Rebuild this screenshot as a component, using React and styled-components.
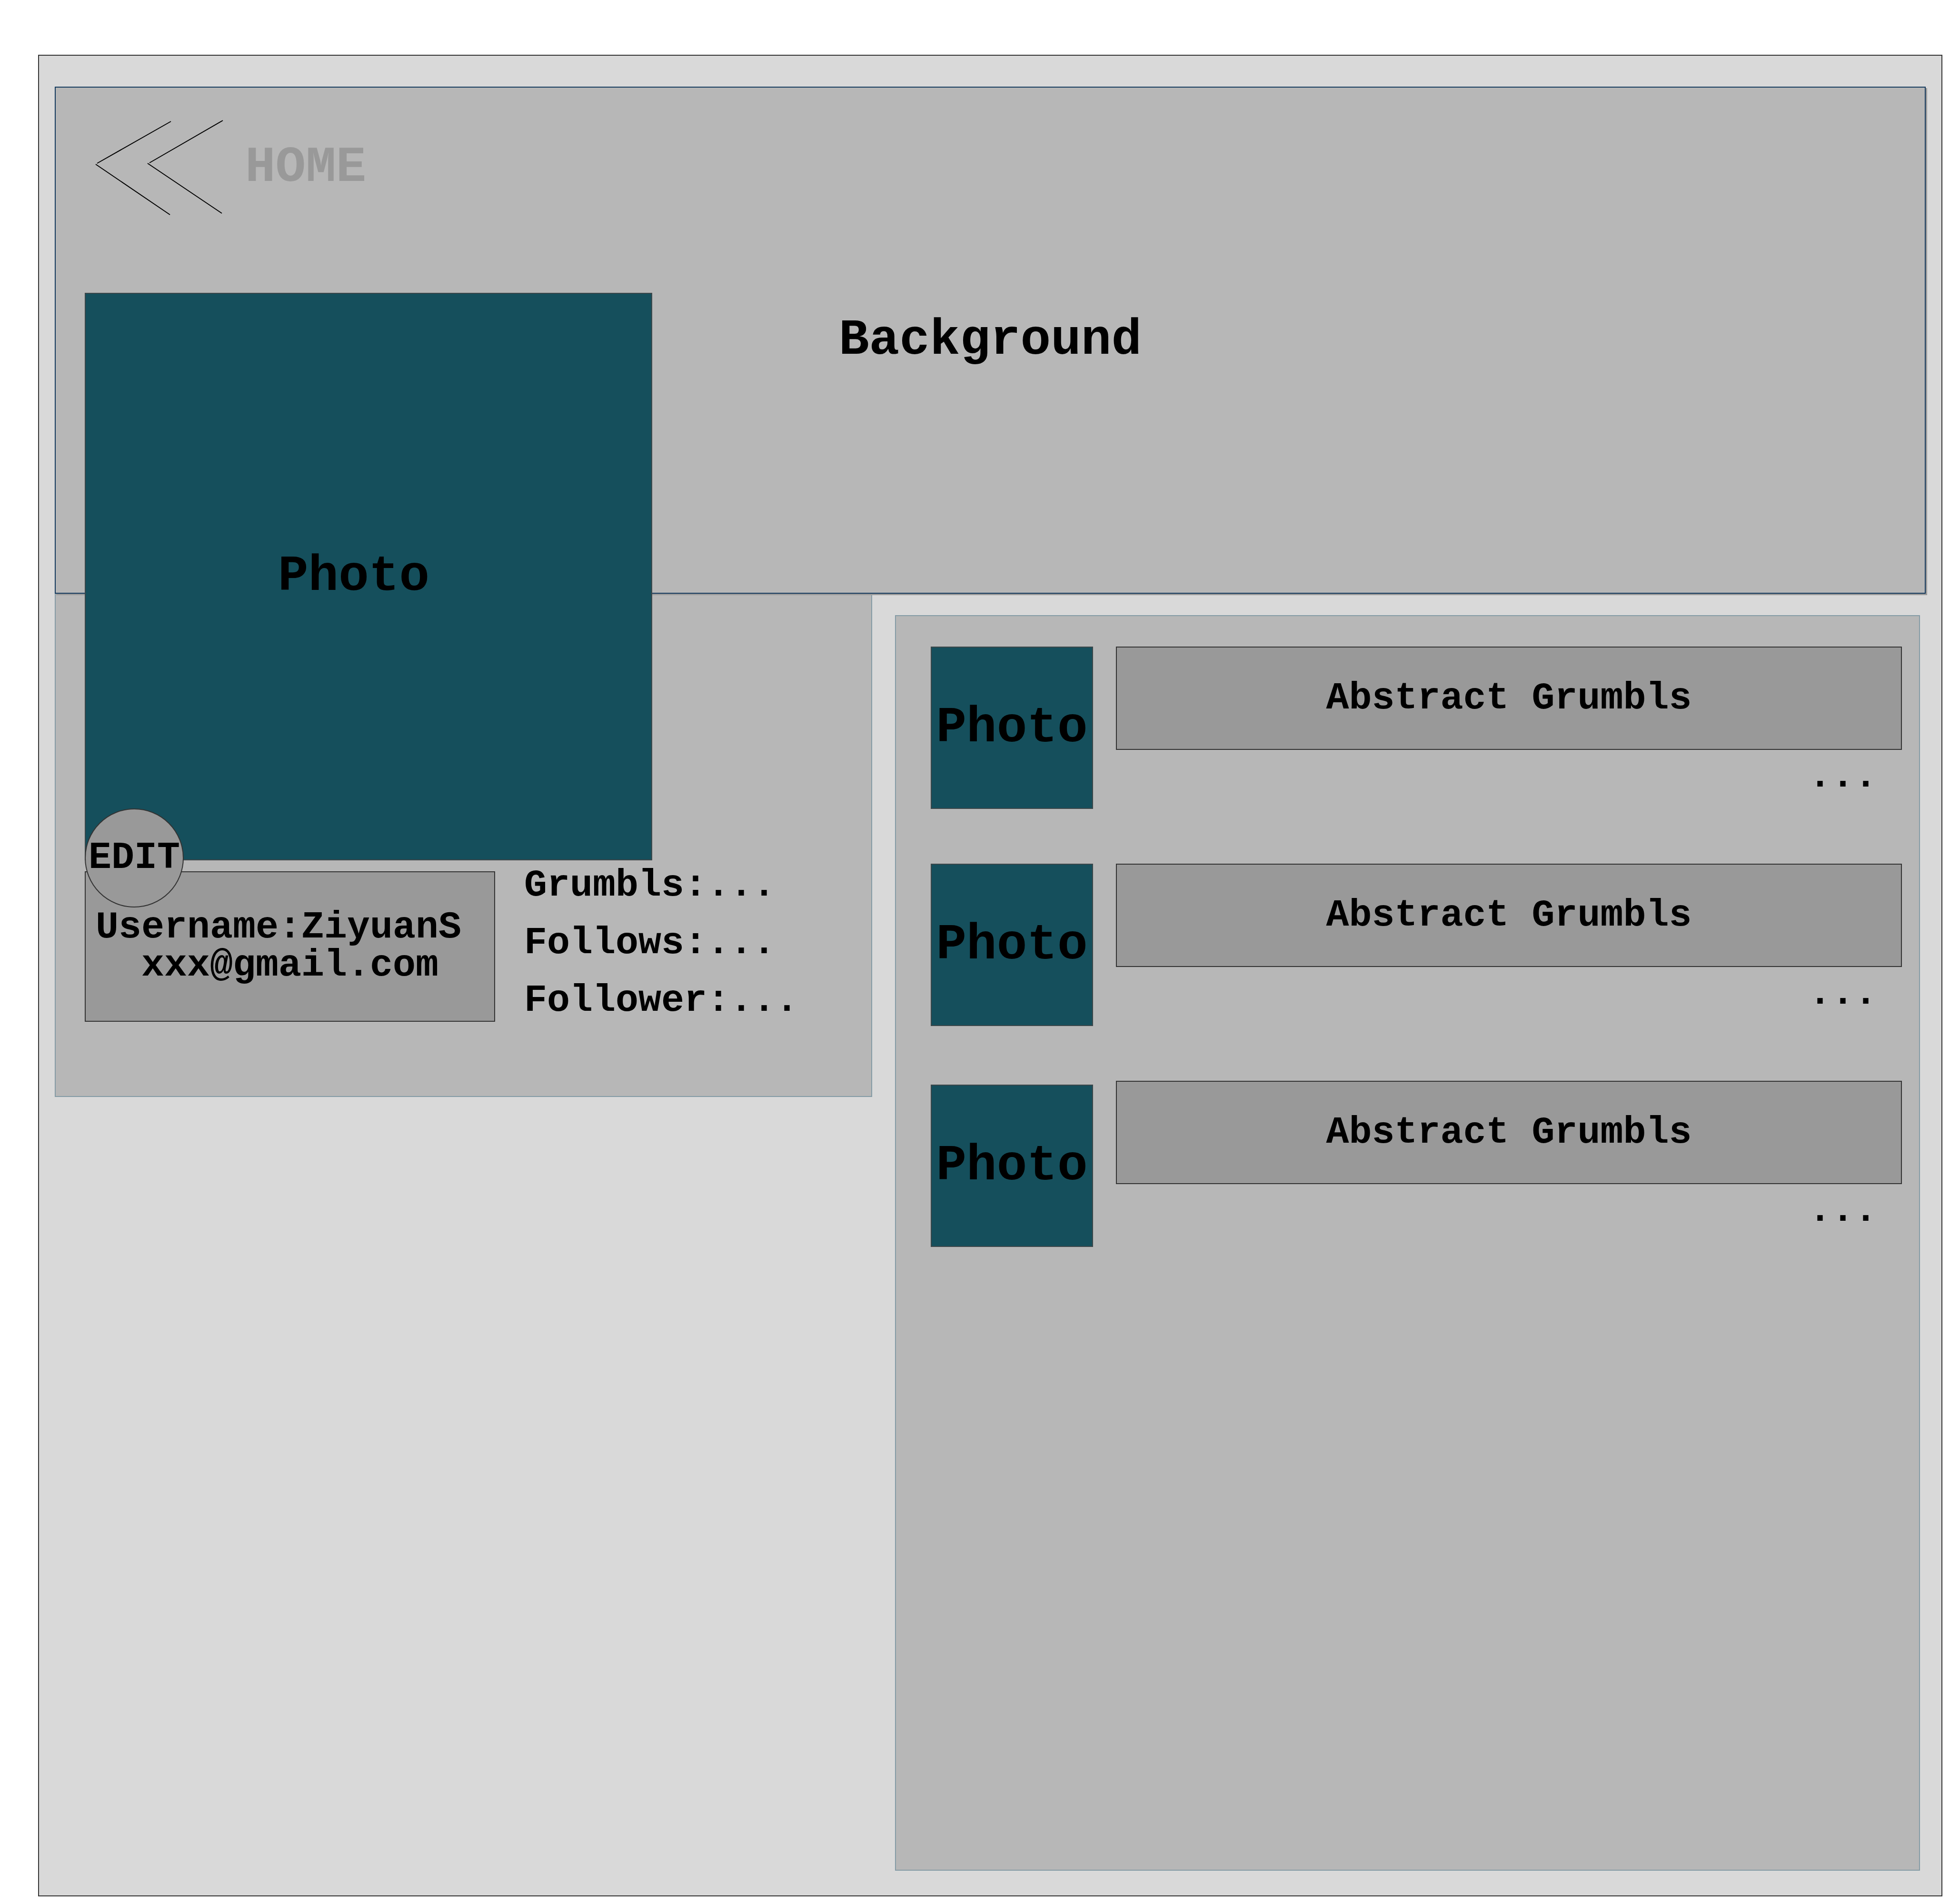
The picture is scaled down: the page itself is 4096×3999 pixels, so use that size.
import React from "react";
import styled, { createGlobalStyle } from "styled-components";

const GlobalStyle = createGlobalStyle`
  *, *::before, *::after { box-sizing: border-box; }
  body {
    margin: 0;
    background: #ffffff;
    color: #000000;
    font-family: "Liberation Mono", monospace;
    font-weight: 700;
    font-size: 80px;
    line-height: 80px;
  }
  button {
    font: inherit;
    color: inherit;
    cursor: pointer;
  }
`;

const Page = styled.div`
  display: flex;
  min-height: 100vh;
  padding: 115px 16px 16px 80px;
`;

const Frame = styled.main`
  display: flex;
  flex: 1;
  flex-direction: column;
  padding: 65px 33px 52px;
  border: 2px solid #333333;
  background: #d9d9d9;
`;

const Banner = styled.header`
  position: relative;
  z-index: 1;
  display: grid;
  min-height: 1065px;
  padding: 0 83px;
  border: 2px solid #143a5e;
  background: #b7b7b7;
  box-shadow: 3px 3px 0 #999999;
`;

const HomeLink = styled.a`
  grid-area: 1 / 1;
  place-self: start;
  display: flex;
  align-items: center;
  gap: 45px;
  margin-top: 68px;
  color: #999999;
  font-size: 106px;
  line-height: 120px;
  text-decoration: none;
`;

const BackIcon = styled.svg`
  width: 270px;
  height: 200px;
  fill: none;
  stroke: #000000;
  stroke-width: 2;
`;

const BannerTitle = styled.h1`
  grid-area: 1 / 1;
  place-self: center;
  margin: 0;
  font-size: 106px;
  line-height: 120px;
`;

const Columns = styled.div`
  display: grid;
  flex: 1;
  grid-template-columns: 1717fr 2153fr;
  gap: 48px;
  padding-right: 12px;
`;

const Profile = styled.section`
  display: flex;
  flex-direction: column;
  align-self: start;
  padding: 0 61px 156px;
  border: 2px solid #849ba5;
  border-top: 0;
  background: #b7b7b7;
`;

const Photo = styled.div`
  display: flex;
  flex: none;
  align-items: center;
  justify-content: center;
  width: 341px;
  aspect-ratio: 1;
  margin-top: ${({ $drop = 0 }) => $drop}px;
  border: 2px solid #3c474a;
  background: #154f5c;
  font-size: 106px;
  line-height: 120px;
`;

const ProfilePhoto = styled(Photo)`
  position: relative;
  z-index: 2;
  width: 1192px;
  margin-top: -632px;
  padding-right: 62px;
`;

const EditButton = styled.button`
  position: absolute;
  left: -2px;
  bottom: -101px;
  width: 208px;
  height: 208px;
  padding: 0;
  border: 2px solid #333333;
  border-radius: 50%;
  background: #999999;
  font-size: 80px;
  line-height: 80px;
`;

const Details = styled.div`
  display: flex;
  align-items: flex-start;
  gap: 61px;
  margin-top: 13px;
`;

const Account = styled.div`
  display: flex;
  align-items: center;
  justify-content: center;
  width: 862px;
  height: 316px;
  margin-top: 10px;
  border: 2px solid #333333;
  background: #999999;
`;

const AccountText = styled.p`
  margin: 0;
  text-align: center;
  white-space: pre;
`;

const Stats = styled.ul`
  display: flex;
  flex-direction: column;
  gap: 41px;
  margin: 0;
  padding: 0;
  list-style: none;
`;

const Feed = styled.ul`
  display: flex;
  flex-direction: column;
  gap: 115px;
  margin: 45px 0 0;
  padding: 64px 36px 64px 73px;
  border: 2px solid #849ba5;
  background: #b7b7b7;
  list-style: none;
`;

const Post = styled.li`
  display: flex;
  align-items: flex-start;
  gap: 48px;
`;

const PostBody = styled.div`
  display: flex;
  flex: 1;
  flex-direction: column;
  gap: 16px;
`;

const Abstract = styled.div`
  display: flex;
  align-items: center;
  justify-content: center;
  height: 217px;
  border: 2px solid #333333;
  background: #999999;
`;

const MoreButton = styled.button`
  align-self: flex-end;
  margin-right: 52px;
  padding: 0;
  border: 0;
  background: none;
`;

const account = "Username:ZiyuanS \nxxx@gmail.com";

const posts = [
  { id: 1, text: "Abstract Grumbls", drop: 0 },
  { id: 2, text: "Abstract Grumbls", drop: 0 },
  { id: 3, text: "Abstract Grumbls", drop: 8 },
];

const stats = ["Grumbls:...", "Follows:...", "Follower:..."];

export default function App() {
  return (
    <>
      <GlobalStyle />
      <Page>
        <Frame>
          <Banner>
            <HomeLink href="#home">
              <BackIcon viewBox="0 0 270 200" aria-hidden="true">
                <path d="M159 3L4 91M1 93L157 199M268 1L114 90M110 91L266 196" />
              </BackIcon>
              HOME
            </HomeLink>
            <BannerTitle>Background</BannerTitle>
          </Banner>
          <Columns>
            <Profile>
              <ProfilePhoto>
                Photo
                <EditButton type="button">EDIT</EditButton>
              </ProfilePhoto>
              <Details>
                <Account>
                  <AccountText>{account}</AccountText>
                </Account>
                <Stats>
                  {stats.map((label) => (
                    <li key={label}>{label}</li>
                  ))}
                </Stats>
              </Details>
            </Profile>
            <Feed>
              {posts.map((post) => (
                <Post key={post.id}>
                  <Photo $drop={post.drop}>Photo</Photo>
                  <PostBody>
                    <Abstract>{post.text}</Abstract>
                    <MoreButton type="button">...</MoreButton>
                  </PostBody>
                </Post>
              ))}
            </Feed>
          </Columns>
        </Frame>
      </Page>
    </>
  );
}
